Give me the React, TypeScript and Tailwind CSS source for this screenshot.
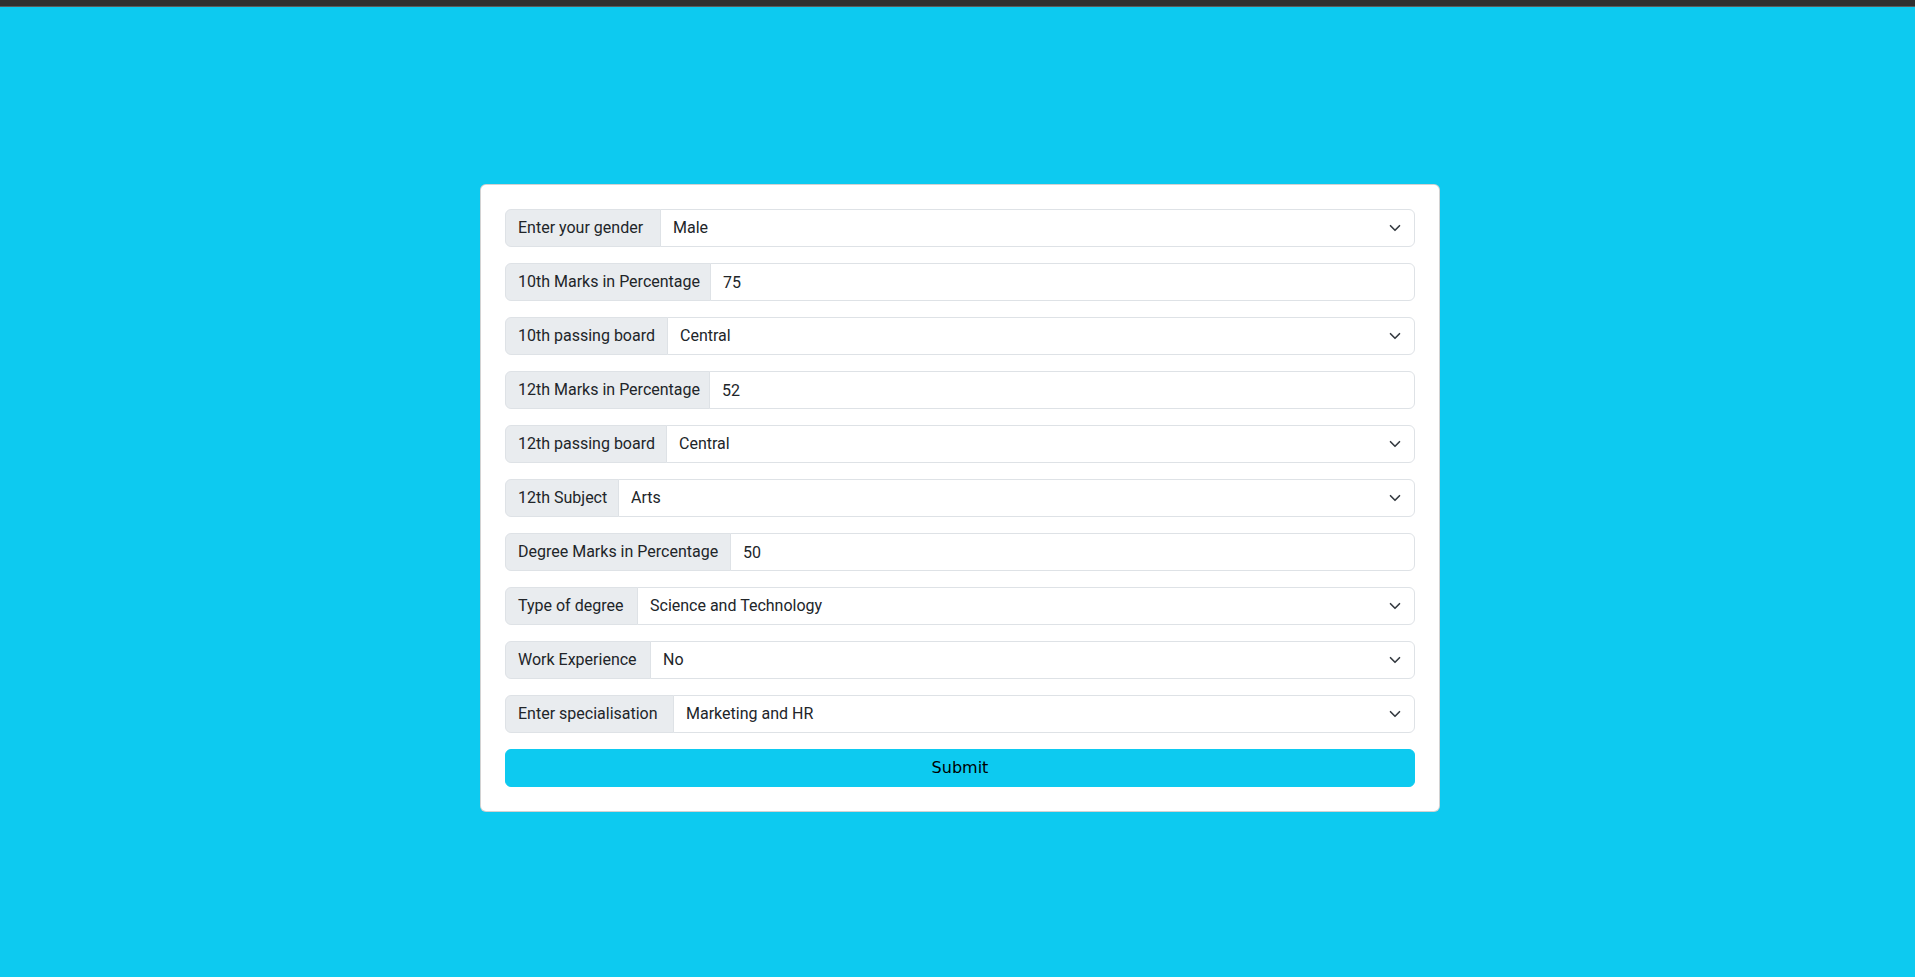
import React from "react";

type Row =
  | { label: string; w: string; kind: "select"; value: string; options: string[] }
  | { label: string; w: string; kind: "input"; value: string };

const rows: Row[] = [
  { label: "Enter your gender", w: "w-[156px]", kind: "select", value: "Male", options: ["Male", "Female"] },
  { label: "10th Marks in Percentage", w: "w-[206px]", kind: "input", value: "75" },
  { label: "10th passing board", w: "w-[163px]", kind: "select", value: "Central", options: ["Central", "Others"] },
  { label: "12th Marks in Percentage", w: "w-[205px]", kind: "input", value: "52" },
  { label: "12th passing board", w: "w-[162px]", kind: "select", value: "Central", options: ["Central", "Others"] },
  { label: "12th Subject", w: "w-[114px]", kind: "select", value: "Arts", options: ["Arts", "Commerce", "Science"] },
  { label: "Degree Marks in Percentage", w: "w-[226px]", kind: "input", value: "50" },
  { label: "Type of degree", w: "w-[133px]", kind: "select", value: "Science and Technology", options: ["Science and Technology", "Commerce and Management", "Others"] },
  { label: "Work Experience", w: "w-[146px]", kind: "select", value: "No", options: ["No", "Yes"] },
  { label: "Enter specialisation", w: "w-[169px]", kind: "select", value: "Marketing and HR", options: ["Marketing and HR", "Marketing and Finance"] },
];

function Chevron() {
  return (
    <svg
      className="pointer-events-none absolute right-[12px] top-1/2 -translate-y-1/2"
      width="16"
      height="12"
      viewBox="0 0 16 16"
      fill="none"
      stroke="#343a40"
      strokeWidth="2.2"
      strokeLinecap="round"
      strokeLinejoin="round"
    >
      <path d="m2 5 6 6 6-6" />
    </svg>
  );
}

const FONT = "Roboto, 'Open Sans', sans-serif";

export default function App() {
  return (
    <div className="min-h-[977px] bg-[#0dcaf0] text-[#212529]" style={{ fontFamily: FONT }}>
      <div className="h-[7px] bg-[#303030] border-b border-[#5c5c5c]" />
      <div className="flex justify-center pl-[5px] pt-[177px]">
        <div className="w-[960px] rounded-[6px] border border-[rgba(0,0,0,0.175)] bg-white p-6">
          {rows.map((r) => (
            <div key={r.label} className="mb-4 flex h-[38px] w-full items-stretch">
              <span
                className={`${r.w} flex shrink-0 items-center whitespace-nowrap rounded-l-[6px] border border-[#dee2e6] bg-[#e9ecef] px-3 text-[16px] leading-6 text-[#212529]`}
              >
                {r.label}
              </span>
              {r.kind === "select" ? (
                <div className="relative -ml-px flex-1">
                  <select
                    defaultValue={r.value}
                    className="h-full w-full appearance-none rounded-r-[6px] border border-[#dee2e6] bg-white pl-3 pr-9 text-[16px] leading-6 text-[#212529] outline-none"
                    style={{ fontFamily: FONT }}
                  >
                    {r.options.map((o) => (
                      <option key={o}>{o}</option>
                    ))}
                  </select>
                  <Chevron />
                </div>
              ) : (
                <input
                  defaultValue={r.value}
                  className="-ml-px h-full min-w-0 flex-1 rounded-r-[6px] border border-[#dee2e6] bg-white px-3 text-[16px] leading-6 text-[#212529] outline-none"
                  style={{ fontFamily: FONT }}
                />
              )}
            </div>
          ))}
          <button
            className="flex h-[38px] w-full items-center justify-center rounded-[6px] border border-[#0dcaf0] bg-[#0dcaf0] text-[16px] text-black"
            style={{ fontFamily: "'DejaVu Sans', sans-serif" }}
          >
            Submit
          </button>
        </div>
      </div>
    </div>
  );
}
